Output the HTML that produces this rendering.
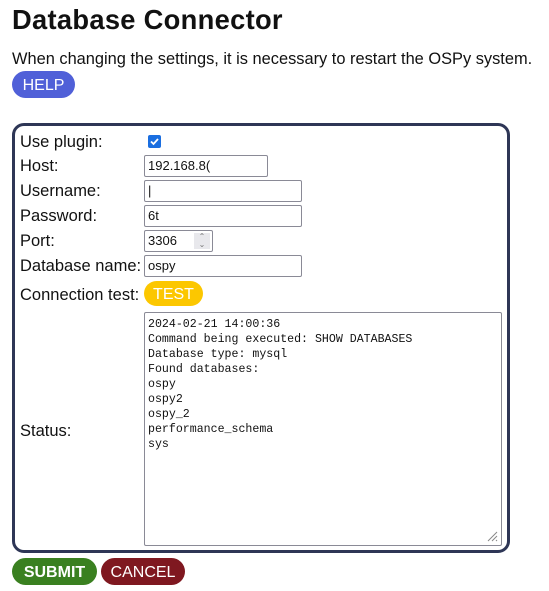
<!DOCTYPE html>
<html><head><style>
body{margin:0;background:#fff;font-family:"Liberation Sans",sans-serif;color:#111;width:549px;height:591px;overflow:hidden;position:relative}
.a{position:absolute;white-space:nowrap}
h1{position:absolute;left:12px;top:4px;margin:0;font-size:27.3px;font-weight:bold;letter-spacing:0.3px}
.lbl{position:absolute;left:20px;font-size:16.5px;margin-top:2px}
.in{position:absolute;left:144px;height:20px;border:1px solid #8a8a96;border-radius:2px;font-size:13px;line-height:20px;padding-left:3px;box-sizing:content-box}
.btn{position:absolute;border-radius:14px;color:#fff;font-size:16px;text-align:center;line-height:29px}
</style></head><body>
<h1>Database Connector</h1>
<div class="a" style="left:12px;top:50px;font-size:16.4px">When changing the settings, it is necessary to restart the OSPy system.</div>
<div class="btn" style="left:12px;top:71px;width:63px;height:27px;background:#5060d8;">HELP</div>
<div class="a" style="left:12px;top:123px;width:492px;height:424px;border:3px solid #2e3656;border-radius:12px"></div>
<div class="lbl" style="top:131px">Use plugin:</div>
<div class="a" style="left:148px;top:135px;width:13px;height:13px;background:#1a6ee0;border-radius:2px"><svg width="13" height="13"><path d="M3 6.5l2.5 2.5 4.5-5" stroke="#fff" stroke-width="1.8" fill="none"/></svg></div>
<div class="lbl" style="top:155px">Host:</div>
<div class="in" style="top:155px;width:119px">192.168.8(</div>
<div class="lbl" style="top:180px">Username:</div>
<div class="in" style="top:180px;width:153px">|</div>
<div class="lbl" style="top:205px">Password:</div>
<div class="in" style="top:205px;width:153px">6t</div>
<div class="lbl" style="top:230px">Port:</div>
<div class="in" style="top:230px;width:64px">3306<span style="position:absolute;right:2px;top:2px;width:16px;height:16px;background:#e8e8ec;font-size:8px;line-height:8px;text-align:center;color:#777">⌃<br>⌄</span></div>
<div class="lbl" style="top:255px">Database name:</div>
<div class="in" style="top:255px;width:153px">ospy</div>
<div class="lbl" style="top:284px">Connection test:</div>
<div class="btn" style="left:144px;top:281px;width:59px;height:25px;background:#fcc700;line-height:27px">TEST</div>
<div class="lbl" style="top:420px">Status:</div>
<div class="a" style="left:144px;top:312px;width:353px;height:228px;border:1px solid #8a8a96;border-radius:2px;font-family:'Liberation Mono',monospace;font-size:11.6px;line-height:15px;padding:4px 0 0 3px;white-space:pre">2024-02-21 14:00:36
Command being executed: SHOW DATABASES
Database type: mysql
Found databases:
ospy
ospy2
ospy_2
performance_schema
sys</div>
<svg class="a" style="left:486px;top:530px" width="12" height="12"><path d="M11 2L2 11M11 6L6 11M11 10L10 11" stroke="#888" stroke-width="1"/></svg>
<div class="btn" style="left:12px;top:558px;width:85px;height:27px;background:#3a8020;font-weight:bold">SUBMIT</div>
<div class="btn" style="left:101px;top:558px;width:84px;height:27px;background:#7f1820">CANCEL</div>
</body></html>
